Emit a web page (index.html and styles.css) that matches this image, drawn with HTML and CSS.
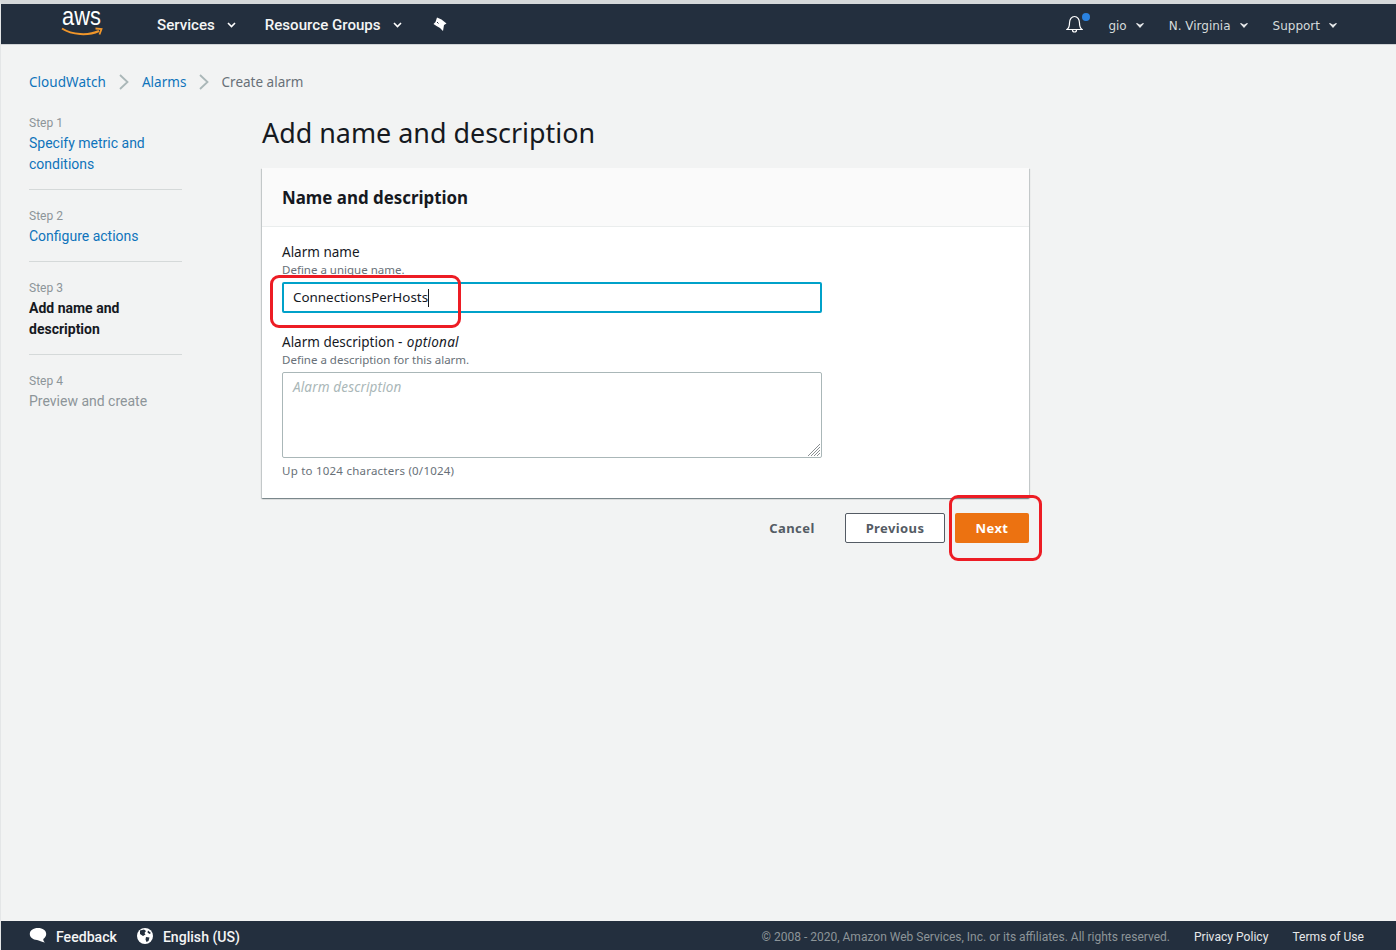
FILE: index.html
```html
<!DOCTYPE html>
<html lang="en">
<head>
<meta charset="utf-8">
<title>Add name and description</title>
<link rel="stylesheet" href="styles.css">
</head>
<body>
<div class="app">
  <header class="topbar">
    <div class="logo">
      <span class="logo-text">aws</span>
      <svg class="logo-smile" width="42" height="11" viewBox="0 0 42 11"><path d="M1 1.500C11 8 27 9 38 4" fill="none" stroke="#f0962a" stroke-width="2"/><path d="M34.500 1.500L40.500 2L38.500 7.500" fill="none" stroke="#f0962a" stroke-width="1.800"/></svg>
    </div>
    <nav class="nav-main">
      <a class="nav-item services">Services<svg class="caret" width="9" height="6" viewBox="0 0 9 6"><path d="M1 1L4.500 4.500L8 1" fill="none" stroke="#fff" stroke-width="1.600"/></svg></a>
      <a class="nav-item groups">Resource Groups<svg class="caret" width="9" height="6" viewBox="0 0 9 6"><path d="M1 1L4.500 4.500L8 1" fill="none" stroke="#fff" stroke-width="1.600"/></svg></a>
      <svg class="pin" width="14" height="15" viewBox="0 0 14 15"><path d="M4 .5L8.500 2.500L13.500 6.500L11 8L10 14L7 11L3.500 9L.5 7L2.500 5Z" fill="#fff"/><path d="M4 5L5.500 6.500" stroke="#232f3e" stroke-width="1"/></svg>
    </nav>
    <div class="nav-right">
      <span class="bell-wrap">
        <svg class="bell" width="17" height="18" viewBox="0 0 17 18"><path d="M1 14.500C3 13 3.500 11 3.500 8C3.500 4.500 5.500 1.500 8.500 1.500C11.500 1.500 13.500 4.500 13.500 8C13.500 11 14 13 16 14.500ZM6.500 15C6.500 16.300 7.300 17 8.500 17C9.700 17 10.500 16.300 10.500 15" fill="none" stroke="#fff" stroke-width="1.200"/></svg>
        <span class="bell-dot"></span>
      </span>
      <a class="nav-sub user">gio<svg class="caret-s" width="8" height="5" viewBox="0 0 8 5"><path d="M0 .5L1 0L4 1.800L7 0L8 .5L4 5Z" fill="#e6e8ea"/></svg></a>
      <a class="nav-sub region">N. Virginia<svg class="caret-s" width="8" height="5" viewBox="0 0 8 5"><path d="M0 .5L1 0L4 1.800L7 0L8 .5L4 5Z" fill="#e6e8ea"/></svg></a>
      <a class="nav-sub support">Support<svg class="caret-s" width="8" height="5" viewBox="0 0 8 5"><path d="M0 .5L1 0L4 1.800L7 0L8 .5L4 5Z" fill="#e6e8ea"/></svg></a>
    </div>
  </header>

  <main class="content">
    <div class="breadcrumbs">
      <a class="crumb-link">CloudWatch</a>
      <svg class="chev" width="10" height="16" viewBox="0 0 10 16"><path d="M1 1L8.500 8L1 15" fill="none" stroke="#aab7b8" stroke-width="1.800"/></svg>
      <a class="crumb-link">Alarms</a>
      <svg class="chev" width="10" height="16" viewBox="0 0 10 16"><path d="M1 1L8.500 8L1 15" fill="none" stroke="#aab7b8" stroke-width="1.800"/></svg>
      <span class="crumb-current">Create alarm</span>
    </div>

    <div class="columns">
      <aside class="steps">
        <div class="step">
          <div class="step-num">Step 1</div>
          <a class="step-title link">Specify metric and conditions</a>
        </div>
        <div class="step">
          <div class="step-num">Step 2</div>
          <a class="step-title link">Configure actions</a>
        </div>
        <div class="step">
          <div class="step-num">Step 3</div>
          <span class="step-title current">Add name and description</span>
        </div>
        <div class="step last">
          <div class="step-num">Step 4</div>
          <span class="step-title disabled">Preview and create</span>
        </div>
      </aside>

      <section class="main-col">
        <h1 class="page-title">Add name and description</h1>
        <div class="card">
          <div class="card-head"><h2 class="card-title">Name and description</h2></div>
          <div class="card-body">
            <div class="label">Alarm name</div>
            <div class="hint hint-name">Define a unique name.</div>
            <div class="name-input">ConnectionsPerHosts<span class="cursor"></span></div>
            <div class="label label-desc">Alarm description - <em class="opt">optional</em></div>
            <div class="hint hint-desc">Define a description for this alarm.</div>
            <div class="desc-input">
              <span class="placeholder">Alarm description</span>
              <svg class="grip" width="14" height="14" viewBox="0 0 14 14"><path d="M13 1L1 13M13 4L4 13M13 7L7 13M13 10L10 13" stroke="#8a8f92" stroke-width="1"/></svg>
            </div>
            <div class="hint hint-count">Up to 1024 characters (0/1024)</div>
          </div>
        </div>
        <div class="actions">
          <button class="btn-text">Cancel</button>
          <button class="btn-outline">Previous</button>
          <button class="btn-primary">Next</button>
        </div>
        <span class="mark mark-input"></span>
        <span class="mark mark-next"></span>
      </section>
    </div>
  </main>

  <footer class="footer">
    <div class="foot-left">
      <svg class="foot-icon" width="18" height="17" viewBox="0 0 18 17"><path d="M9 1C4.200 1 .8 3.500.8 7C.8 10.200 3.800 12.700 8 13C10 13.300 13 15 16 15.500C14.800 14.500 14.200 13.300 14.300 11.900C16 10.800 17.200 9 17.200 7C17.200 3.500 13.800 1 9 1Z" fill="#fff"/></svg>
      <a class="foot-strong">Feedback</a>
      <svg class="foot-icon globe" width="16" height="16" viewBox="0 0 16 16"><circle cx="8" cy="8" r="8" fill="#fff"/><path d="M3 2.500L7 1.500L9 3L7.500 5L8.500 6.500L6 8L3 6ZM9 9L12.500 9.500L11.500 13L9.500 14L8.500 11.500ZM11 2.500L14 5L12.500 6L10.500 4.500Z" fill="#232f3e"/></svg>
      <a class="foot-strong">English (US)</a>
    </div>
    <div class="foot-right">
      <span class="copy">© 2008 - 2020, Amazon Web Services, Inc. or its affiliates. All rights reserved.</span>
      <a class="foot-link">Privacy Policy</a>
      <a class="foot-link">Terms of Use</a>
    </div>
  </footer>
</div>
</body>
</html>
```

FILE: styles.css
```css
* { box-sizing: border-box; }
html, body { margin: 0; height: 100%; }
body { background: #fff; font-family: "Noto Sans", sans-serif; }
.app {
  height: 950px; width: 1396px; overflow: hidden;
  display: flex; flex-direction: column;
  background: #f2f3f3;
  border-top: 4px solid #d5d8da;
  border-left: 1px solid #e4e6e7;
}
.topbar {
  height: 41px; flex: none; background: #232f3e;
  display: flex; align-items: center;
  border-bottom: 1px solid #d0d3d5;
  color: #fff; font-family: Roboto, sans-serif;
  padding-top: 2px;
}
.logo { width: 156px; flex: none; height: 38px; padding: 1px 0 0 61px; }
.logo-text { display: block; font: 400 26px/19px "Liberation Sans", sans-serif; color: #fff; transform: scaleX(.84); transform-origin: left center; }
.logo-smile { display: block; margin-top: 1px; margin-left: -1px; }
.nav-main { display: flex; align-items: center; }
.nav-item { font-size: 15.100px; font-weight: 500; display: flex; align-items: center; color: #f4f5f5; }
.caret { margin-left: 12px; }
.services { margin-right: 29px; }
.groups { margin-right: 31px; }
.pin { margin-top: -1px; }
.nav-right { margin-left: auto; margin-top: 1px; display: flex; align-items: center; font-family: "DejaVu Sans", sans-serif; font-size: 12px; color: #d5dbdb; padding-right: 59px; }
.bell-wrap { position: relative; display: block; width: 42px; height: 20px; }
.bell { position: absolute; left: 0; top: -1px; }
.bell-dot { position: absolute; left: 16px; top: -3px; width: 8px; height: 8px; border-radius: 50%; background: #2a82e0; }
.nav-sub { display: flex; align-items: center; }
.caret-s { margin-left: 9px; }
.user { margin-right: 25px; }
.region { margin-right: 25px; }
.content { flex: 1; min-height: 0; padding: 0 0 0 28px; display: flex; flex-direction: column; }
.breadcrumbs { display: flex; align-items: center; height: 20px; margin-top: 27px; font-size: 13.500px; }
.crumb-link { color: #0f73bb; letter-spacing: .05px; }
.chev { margin: 0 13px; }
.chev + .crumb-link + .chev { margin: 0 12.500px 0 12.500px; }
.crumb-current { color: #687078; }
.columns { display: flex; margin-top: 18px; }
.steps { width: 153px; flex: none; padding-top: 5px; font-family: Roboto, sans-serif; }
.step { padding-bottom: 14px; margin-bottom: 18px; border-bottom: 1px solid #d5d9d9; }
.step.last { border-bottom: 0; }
.step-num { font-size: 12px; line-height: 16px; color: #8d9599; margin-bottom: 2px; }
.step-title { display: block; font-size: 14px; line-height: 21px; }
.step-title.link { color: #0f73bb; }
.step-title.current { color: #16191f; font-weight: 700; }
.step-title.disabled { color: #8d9599; }
.main-col { margin-left: 80px; width: 767px; position: relative; }
.page-title { margin: 0; font-size: 26.900px; font-weight: 400; line-height: 40px; color: #16191f; height: 58px; padding-top: 3px; }
.card { background: #fff; height: 330px; box-shadow: 0 1px 1px rgba(0,28,36,.3), 1px 1px 1px rgba(0,28,36,.15), -1px 1px 1px rgba(0,28,36,.15); }
.card-head { height: 59px; background: #fafafa; border-bottom: 1px solid #eaeded; padding: 0 20px; display: flex; align-items: center; }
.card-title { margin: 0; font-size: 16.900px; font-weight: 700; color: #16191f; }
.card-body { padding: 16px 20px 0; }
.label { font-size: 13.500px; line-height: 18px; color: #16191f; }
.hint { font-size: 11.500px; line-height: 14px; color: #687078; }
.hint-name { margin-top: 2px; height: 11px; overflow: visible; }
.name-input {
  width: 540px; height: 31px; margin-top: 8px; border: 2px solid #00a1c9; border-radius: 2px;
  font-size: 13.400px; line-height: 27px; padding-left: 9px; color: #16191f; background: #fff; display: flex;
}
.cursor { display: block; width: 1px; height: 18px; background: #16191f; margin: 5px 0 0 0; }
.label-desc { margin-top: 20px; }
.opt { letter-spacing: .25px; margin-left: 1px; }
.hint-desc { margin-top: 2px; }
.desc-input { width: 540px; height: 86px; margin-top: 5px; border: 1px solid #aab7b8; border-radius: 2px; background: #fff; padding: 5px 10px; position: relative; }
.placeholder { font-size: 13.500px; font-style: italic; color: #aab7b8; line-height: 18px; display: block; letter-spacing: .15px; }
.grip { position: absolute; right: 0; bottom: 0; }
.hint-count { margin-top: 6px; letter-spacing: .23px; }
.actions { display: flex; justify-content: flex-end; align-items: center; margin-top: 15px; }
.actions button { font-family: "Noto Sans", sans-serif; font-size: 13px; font-weight: 700; letter-spacing: .4px; height: 30px; border-radius: 2px; padding: 0; }
.btn-text { background: none; border: 0; color: #545b64; width: 46px; margin-right: 30px; }
.btn-outline { background: #fff; border: 1px solid #545b64; color: #545b64; width: 100px; margin-right: 10px; }
.btn-primary { background: #ec7211; border: 0; color: #fff; width: 74px; }
.mark { position: absolute; border: 3.500px solid #ed1c24; border-radius: 9px; pointer-events: none; }
.mark-input { left: 8px; top: 165px; width: 191px; height: 53px; }
.mark-next { left: 687px; top: 385px; width: 93px; height: 66px; }
.footer {
  height: 29px; flex: none; background: #232f3e; display: flex; align-items: center;
  padding: 2px 32px 0 28px; font-family: Roboto, sans-serif;
}
.foot-left { display: flex; align-items: center; }
.foot-icon { margin-right: 9px; margin-top: -2px; }
.globe { margin-left: 20px; margin-right: 10px; }
.foot-strong { font-size: 14.100px; font-weight: 500; color: #f4f5f5; }
.foot-right { margin-left: auto; display: flex; align-items: center; font-size: 12px; }
.copy { color: #8d9599; margin-right: 24px; }
.foot-link { color: #e6e8ea; margin-right: 24px; font-size: 12.100px; }
.foot-link:last-child { margin-right: 0; }
```
